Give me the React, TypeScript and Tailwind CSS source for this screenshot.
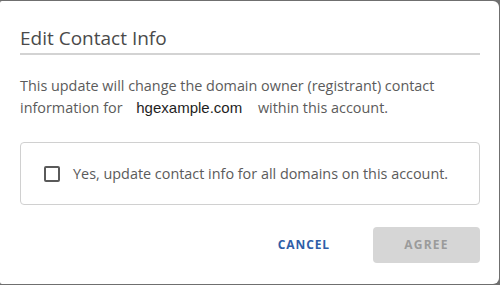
export default function App() {
  return (
    <div className="w-[500px] h-[285px] bg-[#6f6f6f] pt-px pr-px pb-px">
      <div
        className="h-full bg-white rounded-r-[6px] rounded-l-[2px] pl-[20px] pr-[19px] pt-[25px]"
        style={{ fontFamily: '"Open Sans", "Noto Sans", sans-serif' }}
      >
        <h2 className="text-[19px] leading-[24px] text-[#4a4a4a]">Edit Contact Info</h2>
        <div className="mt-[3px] h-[2px] bg-[#d3d3d3]" />

        <p className="mt-[20px] text-[14.4px] leading-[22px] text-[#5b5b5b]">
          This update will change the domain owner (registrant) contact
          <br />
          information for{' '}
          <span
            className="ml-[10px] mr-[12px] text-[15px] text-[#1e1e1e]"
            style={{ fontFamily: '"Liberation Sans", Arial, sans-serif' }}
          >
            hgexample.com
          </span>{' '}
          within this account.
        </p>

        <label className="mt-[23px] h-[63px] flex items-center gap-[13px] pl-[23px] border border-[#d0d0d0] rounded-[4px] cursor-pointer">
          <span className="w-[16px] h-[16px] border-2 border-[#5a5a5a] rounded-[2px] shrink-0" />
          <span className="text-[14.4px] text-[#5b5b5b]">
            Yes, update contact info for all domains on this account.
          </span>
        </label>

        <div className="mt-[22px] flex justify-end items-center gap-[43px]">
          <button className="text-[12px] font-bold tracking-[0.9px] text-[#2f5ea8]">CANCEL</button>
          <button
            disabled
            className="w-[107px] h-[36px] rounded-[4px] bg-[#d6d6d6] text-[12px] font-bold tracking-[1.2px] text-[#9b9b9b]"
          >
            AGREE
          </button>
        </div>
      </div>
    </div>
  );
}
